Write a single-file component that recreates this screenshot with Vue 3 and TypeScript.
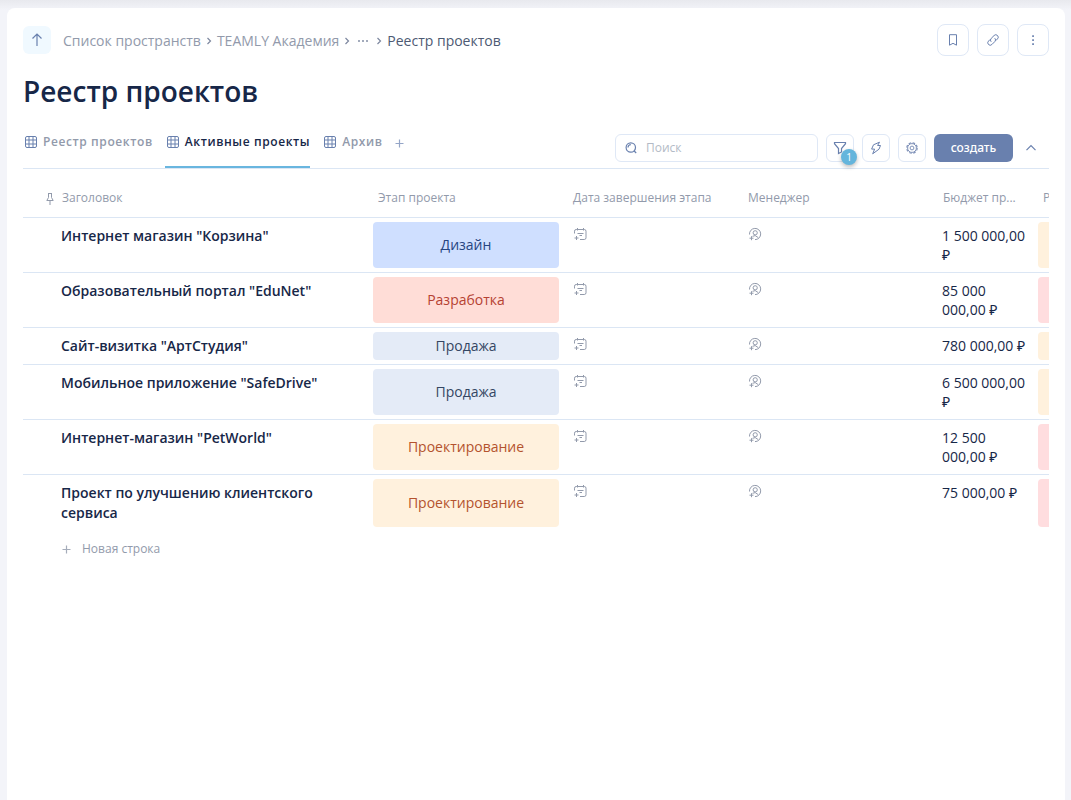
<script setup lang="ts">
import { ref } from 'vue'

interface Stage {
  name: string
  tone: 'blue' | 'coral' | 'gray' | 'amber'
}

interface Project {
  title: string
  stage: Stage
  budget: string
  risk: 'amber' | 'rose'
}

const design: Stage = { name: 'Дизайн', tone: 'blue' }
const development: Stage = { name: 'Разработка', tone: 'coral' }
const sale: Stage = { name: 'Продажа', tone: 'gray' }
const planning: Stage = { name: 'Проектирование', tone: 'amber' }

const projects: Project[] = [
  { title: 'Интернет магазин "Корзина"', stage: design, budget: '1 500 000,00 ₽', risk: 'amber' },
  { title: 'Образовательный портал "EduNet"', stage: development, budget: '85 000 000,00 ₽', risk: 'rose' },
  { title: 'Сайт-визитка "АртСтудия"', stage: sale, budget: '780 000,00 ₽', risk: 'amber' },
  { title: 'Мобильное приложение "SafeDrive"', stage: sale, budget: '6 500 000,00 ₽', risk: 'amber' },
  { title: 'Интернет-магазин "PetWorld"', stage: planning, budget: '12 500 000,00 ₽', risk: 'rose' },
  { title: 'Проект по улучшению клиентского сервиса', stage: planning, budget: '75 000,00 ₽', risk: 'rose' },
]

const tabs = ['Реестр проектов', 'Активные проекты', 'Архив']
const activeTab = ref(1)
const search = ref('')
</script>

<template>
  <main class="panel">
    <header class="topbar">
      <button class="up" type="button" aria-label="Наверх">
        <svg width="14" height="16" viewBox="0 0 14 16"><path d="M7 14V2.500M2.500 6.500 7 2l4.500 4.500" /></svg>
      </button>
      <nav class="crumbs">
        <a href="#">Список пространств</a>
        <svg class="sep" width="6" height="8" viewBox="0 0 6 8"><path d="m1.500 1 3 3-3 3" /></svg>
        <a href="#">TEAMLY Академия</a>
        <svg class="sep" width="6" height="8" viewBox="0 0 6 8"><path d="m1.500 1 3 3-3 3" /></svg>
        <button class="dots" type="button" aria-label="Ещё">
          <svg width="12" height="4" viewBox="0 0 12 4"><path d="M1 1h2v2H1zM5 1h2v2H5zM9 1h2v2H9z" /></svg>
        </button>
        <svg class="sep" width="6" height="8" viewBox="0 0 6 8"><path d="m1.500 1 3 3-3 3" /></svg>
        <span class="current">Реестр проектов</span>
      </nav>
      <div class="actions">
        <button class="square large" type="button" aria-label="В закладки">
          <svg width="16" height="16" viewBox="0 0 16 16"><path d="M4.500 2.700h7v10.500L8 11.300l-3.500 1.900z" /></svg>
        </button>
        <button class="square large" type="button" aria-label="Скопировать ссылку">
          <svg width="16" height="16" viewBox="0 0 16 16"><path d="M6.200 9.800a2.400 2.400 0 0 1 0-3.400l2.900-2.900a2.400 2.400 0 0 1 3.400 3.400l-1.700 1.700M9.800 6.200a2.400 2.400 0 0 1 0 3.400l-2.900 2.900a2.400 2.400 0 0 1-3.400-3.400l1.700-1.700" /></svg>
        </button>
        <button class="square large" type="button" aria-label="Меню">
          <svg class="solid" width="16" height="16" viewBox="0 0 16 16"><path d="M7.200 3.200h1.700v1.700H7.200zM7.200 7.200h1.700v1.700H7.200zM7.200 11.200h1.700v1.700H7.200z" /></svg>
        </button>
      </div>
    </header>

    <h1>Реестр проектов</h1>

    <div class="toolbar">
      <div class="tabs" role="tablist">
        <button
          v-for="(tab, i) in tabs"
          :key="tab"
          class="tab"
          :class="{ active: i === activeTab }"
          type="button"
          role="tab"
          :aria-selected="i === activeTab"
          @click="activeTab = i"
        >
          <svg width="12" height="12" viewBox="0 0 12 12"><rect x=".5" y=".5" width="11" height="11" rx="1.500" /><path d="M4 .5v11M8 .5v11M.5 4h11M.5 8h11" /></svg>
          <span>{{ tab }}</span>
        </button>
        <button class="add-tab" type="button" aria-label="Добавить вкладку">
          <svg width="9" height="9" viewBox="0 0 9 9"><path d="M4.500 .5v8M.5 4.500h8" /></svg>
        </button>
      </div>
      <div class="tools">
        <label class="search">
          <svg width="14" height="14" viewBox="0 0 14 14"><circle cx="6.800" cy="6.500" r="4.700" /><path d="M4 6.500A2.800 2.800 0 0 1 6.800 3.700M10.200 10l2 2" /></svg>
          <input v-model="search" type="text" placeholder="Поиск" aria-label="Поиск" />
        </label>
        <button class="square" type="button" aria-label="Фильтр">
          <svg width="16" height="16" viewBox="0 0 16 16"><path d="M2.500 2.500h11v1.200L9.500 8.500V12l-3 1.500v-5l-4-4.800z" /></svg>
          <span class="badge">1</span>
        </button>
        <button class="square" type="button" aria-label="Автоматизации">
          <svg class="thin" width="16" height="16" viewBox="0 0 16 16"><path d="M11.500 2.200 5.500 4.800 3.600 9.100h3L4.700 13.800l6.300-4.600 1.500-3.700H9.600z" /></svg>
        </button>
        <button class="square" type="button" aria-label="Настройки">
          <svg class="gear" width="16" height="16" viewBox="0 0 16 16"><circle cx="8" cy="8" r="5.200" stroke-width="1.200" stroke-dasharray="2.600 1.480" /><circle cx="8" cy="8" r="4.400" /><circle cx="8" cy="8" r="1.900" /></svg>
        </button>
        <button class="create" type="button">создать</button>
        <button class="collapse" type="button" aria-label="Свернуть">
          <svg width="12" height="8" viewBox="0 0 12 8"><path d="m1.500 6.200 4.500-4.500 4.500 4.500" /></svg>
        </button>
      </div>
    </div>

    <div class="grid">
      <table>
        <colgroup>
          <col class="w-title" /><col class="w-stage" /><col class="w-date" /><col class="w-stage" /><col class="w-budget" /><col class="w-risk" />
        </colgroup>
        <thead>
          <tr>
            <th class="first">
              <svg width="8" height="14" viewBox="0 0 8 14"><path d="M2 1.500h4M2.500 1.500v4l-1.700 3h6.400l-1.700-3v-4M4 8.500V13" /></svg>
              <span>Заголовок</span>
            </th>
            <th>Этап проекта</th>
            <th>Дата завершения этапа</th>
            <th>Менеджер</th>
            <th>Бюджет пр...</th>
            <th>Р</th>
          </tr>
        </thead>
        <tbody>
          <tr v-for="project in projects" :key="project.title">
            <td class="name"><a href="#">{{ project.title }}</a></td>
            <td class="fill"><div class="chip" :class="project.stage.tone">{{ project.stage.name }}</div></td>
            <td class="empty">
              <svg width="14" height="14" viewBox="0 0 14 14"><path d="M1.500 6.500V4.200a1.700 1.700 0 0 1 1.700-1.700h8.100A1.700 1.700 0 0 1 13 4.200v6.600a1.700 1.700 0 0 1-1.700 1.700H7M4.500 1v2.500M10.500 1v2.500M4.500 6.500h6M6.500 8.500h2.500M3.500 9v4M1.500 11h4" /></svg>
            </td>
            <td class="empty">
              <svg width="14" height="14" viewBox="0 0 14 14"><path d="M1.500 7.500A5.600 5.600 0 1 1 7 12.600M3.500 9.200v4M1.500 11.200h4M4.500 9.300q2.600-2 5.600 1.200" /><circle cx="7.200" cy="5.800" r="2.100" /></svg>
            </td>
            <td class="money">{{ project.budget }}</td>
            <td class="fill"><div class="chip" :class="project.risk"></div></td>
          </tr>
        </tbody>
      </table>
    </div>

    <button class="new-row" type="button">
      <svg width="9" height="9" viewBox="0 0 9 9"><path d="M4.500 .5v8M.5 4.500h8" /></svg>
      <span>Новая строка</span>
    </button>
  </main>
</template>

<style>
body {
  margin: 0;
  background: linear-gradient(#e8e9ee, #f3f4f9 10px) no-repeat #f3f4f9;
}
</style>

<style scoped>
.panel {
  box-sizing: border-box;
  min-height: calc(100vh - 8px);
  margin: 8px 6px 0 7px;
  padding: 16px;
  border-radius: 8px 8px 0 0;
  background: #fff;
  color: #172748;
  font: 14px/20px "Open Sans", "Noto Sans", sans-serif;
}
svg {
  display: block;
  flex: none;
  fill: none;
  stroke: #6980ae;
  stroke-width: 1.2;
}
button {
  padding: 0;
  border: 0;
  background: none;
  color: inherit;
  font: inherit;
  cursor: pointer;
}
a {
  color: inherit;
  text-decoration: none;
}
.topbar,
.crumbs,
.actions,
.toolbar,
.tabs,
.tools {
  display: flex;
  align-items: center;
}
.up {
  display: grid;
  place-items: center;
  width: 28px;
  height: 28px;
  border-radius: 6px;
  background: #f0f9ff;
}
.crumbs {
  gap: 5px;
  margin-left: 12px;
  padding-top: 2px;
  color: #929aab;
}
.sep {
  stroke: #7d879f;
}
.dots {
  padding: 0 2px;
}
.dots svg,
.solid {
  fill: #a3abbc;
  stroke: none;
}
.solid {
  fill: #6980ae;
}
.current {
  color: #4d5a73;
}
.actions {
  gap: 8px;
  margin-left: auto;
}
.square {
  position: relative;
  display: grid;
  place-items: center;
  box-sizing: border-box;
  width: 28px;
  height: 28px;
  border: 1px solid #dfe8f6;
  border-radius: 6px;
}
.square.large {
  width: 32px;
  height: 32px;
  border-radius: 8px;
}
.square.large svg,
.thin {
  stroke-width: 1;
}
h1 {
  margin: 15px 0 21px;
  font-size: 28px;
  font-weight: 600;
  line-height: 40px;
}
.toolbar {
  align-items: flex-start;
  justify-content: space-between;
  height: 36px;
  border-bottom: 1px solid #dbe6f4;
}
.tabs {
  align-items: flex-start;
  gap: 12px;
}
.tab {
  display: flex;
  gap: 6px;
  align-items: flex-start;
  box-sizing: border-box;
  height: 36px;
  padding-left: 2px;
  border-bottom: 2px solid transparent;
  color: #929aab;
  font-size: 12px;
  font-weight: 600;
  letter-spacing: 0.05em;
}
.tab svg {
  margin-top: 4px;
  stroke-width: 1;
}
.tab.active {
  border-color: #69b6df;
  color: #172748;
}
.add-tab {
  padding-top: 7px;
}
.add-tab svg {
  stroke: #94a5c7;
}
.tools {
  gap: 8px;
  padding-top: 2px;
}
.search {
  display: flex;
  gap: 8px;
  align-items: center;
  box-sizing: border-box;
  width: 203px;
  height: 28px;
  padding: 0 8px;
  border: 1px solid #dfe8f6;
  border-radius: 6px;
}
.search input {
  min-width: 0;
  flex: 1;
  padding: 0;
  border: 0;
  outline: 0;
  font: 12px/20px "Open Sans", "Noto Sans", sans-serif;
}
.search input::placeholder {
  color: #b3bac6;
}
.gear {
  stroke: #8294ba;
  stroke-width: 1;
}
.badge {
  position: absolute;
  top: 14px;
  left: 14px;
  width: 16px;
  height: 16px;
  border-radius: 50%;
  background: #64b5dc;
  box-shadow: 0 2px 4px #0004;
  color: #fff;
  font-size: 10px;
  line-height: 16px;
}
.create {
  width: 79px;
  height: 28px;
  padding-bottom: 1px;
  border-radius: 6px;
  background: #6980ae;
  color: #fff;
  font: 500 12px/20px "Noto Sans", "Open Sans", sans-serif;
}
.collapse {
  padding: 4px 12px 4px 4px;
}
.grid {
  overflow: hidden;
}
table {
  width: 1160px;
  border-spacing: 0;
  table-layout: fixed;
}
.w-title { width: 345px; }
.w-stage { width: 195px; }
.w-date { width: 175px; }
.w-budget { width: 100px; }
.w-risk { width: 150px; }
th {
  box-sizing: border-box;
  height: 49px;
  padding: 10px 10px 0;
  border-bottom: 1px solid #dbe6f4;
  color: #929aab;
  font-size: 12px;
  font-weight: 400;
  text-align: left;
  white-space: nowrap;
}
.first svg {
  display: inline-block;
  margin: 0 8px 0 13px;
  stroke: #929aab;
  stroke-width: 1;
  vertical-align: middle;
}
td {
  height: 20px;
  padding: 8px 4px 8px 9px;
  border-bottom: 1px solid #dbe6f4;
  vertical-align: top;
}
tbody tr:last-child td {
  border-bottom: 0;
}
.name {
  padding-right: 24px;
  padding-left: 38px;
  font-weight: 600;
}
td.fill {
  height: 1px;
  padding: 4px 4px 4px 5px;
}
.chip {
  display: grid;
  place-items: center;
  box-sizing: border-box;
  height: 100%;
  border-radius: 4px;
}
.blue { background: #cfdfff; color: #27457f; }
.coral { background: #ffddd7; color: #b64232; }
.gray { background: #e4ebf7; color: #344663; }
.amber { background: #fff1dd; color: #b4532e; }
.rose { background: #ffdddf; }
td.empty {
  padding-top: 9px;
  padding-bottom: 7px;
  padding-left: 10px;
}
.empty svg {
  stroke: #929aab;
  stroke-width: 1;
}
.money {
  line-height: 19px;
}
.new-row {
  display: flex;
  gap: 11px;
  align-items: center;
  margin: 8px 0 0 39px;
  color: #929aab;
  font-size: 12px;
}
.new-row svg {
  stroke: #a5acba;
}
</style>
